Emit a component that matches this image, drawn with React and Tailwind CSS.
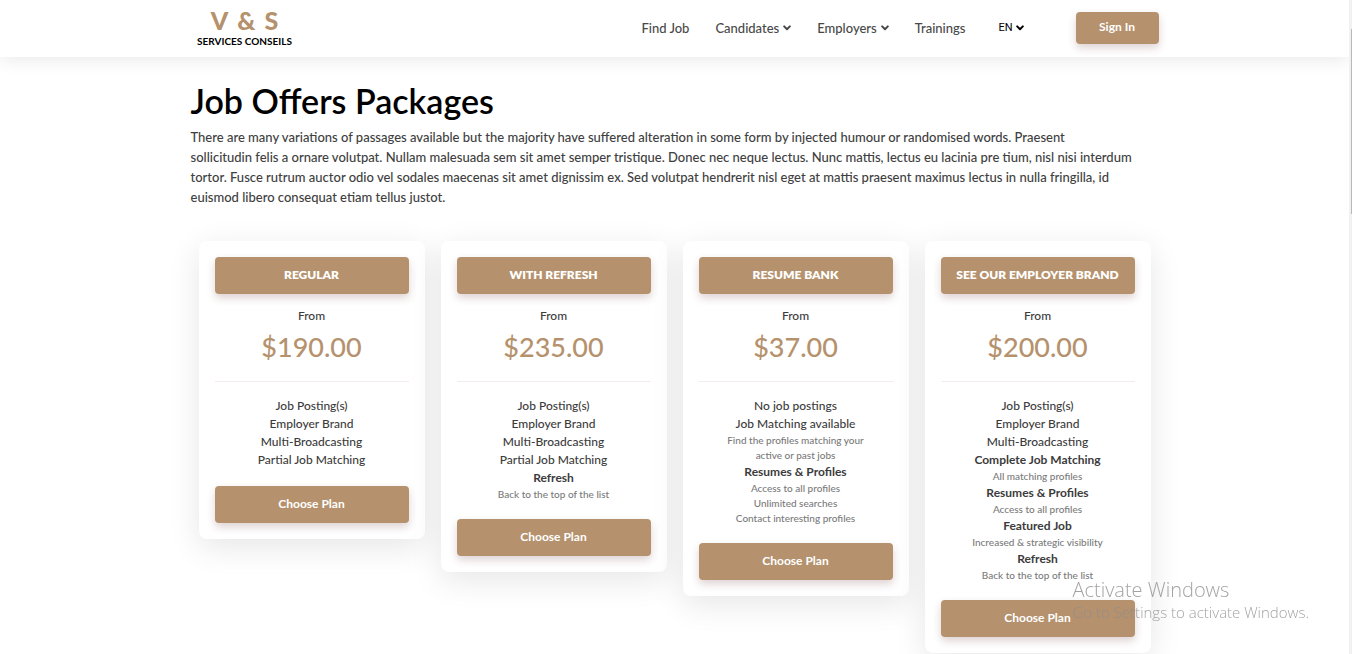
import React from "react";

const plans = [
  {
    name: "REGULAR",
    price: "$190.00",
    features: [
      { label: "Job Posting(s)" },
      { label: "Employer Brand" },
      { label: "Multi-Broadcasting" },
      { label: "Partial Job Matching" },
    ],
  },
  {
    name: "WITH REFRESH",
    price: "$235.00",
    features: [
      { label: "Job Posting(s)" },
      { label: "Employer Brand" },
      { label: "Multi-Broadcasting" },
      { label: "Partial Job Matching" },
      { label: "Refresh", strong: true, notes: ["Back to the top of the list"] },
    ],
  },
  {
    name: "RESUME BANK",
    price: "$37.00",
    features: [
      { label: "No job postings" },
      { label: "Job Matching available", notes: ["Find the profiles matching your active or past jobs"] },
      {
        label: "Resumes & Profiles",
        strong: true,
        notes: ["Access to all profiles", "Unlimited searches", "Contact interesting profiles"],
      },
    ],
  },
  {
    name: "SEE OUR EMPLOYER BRAND",
    price: "$200.00",
    features: [
      { label: "Job Posting(s)" },
      { label: "Employer Brand" },
      { label: "Multi-Broadcasting" },
      { label: "Complete Job Matching", strong: true, notes: ["All matching profiles"] },
      { label: "Resumes & Profiles", strong: true, notes: ["Access to all profiles"] },
      { label: "Featured Job", strong: true, notes: ["Increased & strategic visibility"] },
      { label: "Refresh", strong: true, notes: ["Back to the top of the list"] },
    ],
  },
];

function Chevron({ className }) {
  return (
    <svg viewBox="0 0 8 6" aria-hidden="true" className={`h-[6px] w-2 fill-none stroke-current ${className || ""}`}>
      <path d="M1.2 1.4 L4 4.2 L6.8 1.4" strokeWidth="2" strokeLinecap="round" strokeLinejoin="round" />
    </svg>
  );
}

function Logo() {
  return (
    <a href="#home" className="flex w-[98px] flex-col items-center pb-[5px]">
      <span className="flex gap-[9px] text-[25px] leading-[30px] font-black text-[#b5926d]">
        <span>V</span>
        <span>&amp;</span>
        <span>S</span>
      </span>
      <span className="text-[10px] leading-3 font-bold whitespace-nowrap text-black">SERVICES CONSEILS</span>
    </a>
  );
}

function Header() {
  return (
    <header className="bg-white shadow-[0_4px_16px_rgba(0,0,0,0.08)]">
      <div className="mx-auto flex h-[57px] max-w-[968px] items-center pb-px pl-[5px]">
        <Logo />
        <nav className="ml-auto flex items-center gap-[26px] text-[13px] leading-5 font-medium text-[#484848]">
          <a href="#jobs">Find Job</a>
          <button type="button" className="flex items-center gap-1">
            Candidates
            <Chevron />
          </button>
          <button type="button" className="flex items-center gap-1">
            Employers
            <Chevron />
          </button>
          <a href="#trainings">Trainings</a>
        </nav>
        <div className="relative ml-[33px] flex items-center text-black">
          <select
            aria-label="Language"
            defaultValue="EN"
            className="w-[25px] appearance-none bg-transparent font-['Roboto',sans-serif] text-[11px] leading-4"
          >
            <option>EN</option>
            <option>FR</option>
          </select>
          <Chevron className="pointer-events-none absolute right-0" />
        </div>
        <button
          type="button"
          className="ml-[52px] h-8 w-[83px] rounded-[4px] bg-[#b5926d] pb-[2px] text-[12px] font-bold text-white shadow-[0_4px_8px_rgba(90,30,30,0.2)]"
        >
          Sign In
        </button>
      </div>
    </header>
  );
}

function PlanCard({ plan }) {
  return (
    <article className="rounded-lg bg-white p-4 text-center shadow-[0_8px_32px_rgba(0,0,0,0.1)]">
      <h2 className="flex h-[37px] items-center justify-center rounded-[4px] bg-[#b5926d] pb-px text-[12px] font-extrabold whitespace-nowrap text-white shadow-[0_4px_8px_rgba(90,30,30,0.2)]">
        {plan.name}
      </h2>
      <p className="mt-3 text-[12px] leading-5 font-medium text-[#3c3c3c]">From</p>
      <p className="mt-[3px] text-[27px] leading-9 font-medium text-[#b5926d]">{plan.price}</p>
      <hr className="mt-4 border-[#f5eaec]" />
      <ul className="mt-[15px] text-[12px] leading-[18px] text-[#3c3c3c]">
        {plan.features.map((feature) => (
          <li key={feature.label}>
            <p className={feature.strong ? "font-bold" : "font-medium"}>{feature.label}</p>
            {feature.notes?.map((note) => (
              <p key={note} className="mx-auto max-w-[150px] text-[10px] leading-[15px] font-medium text-[#7a7a7a]">
                {note}
              </p>
            ))}
          </li>
        ))}
      </ul>
      <button
        type="button"
        className="mt-[17px] h-[37px] w-full rounded-[4px] bg-[#b5926d] pb-[2px] text-[12px] font-bold text-white shadow-[0_4px_8px_rgba(90,30,30,0.2)]"
      >
        Choose Plan
      </button>
    </article>
  );
}

export default function App() {
  return (
    <div className="flex min-h-screen bg-white font-['Lato','Open_Sans',sans-serif]">
      <div className="min-w-0 flex-1 overflow-hidden">
        <Header />
        <main className="mx-auto max-w-[968px]">
          <h1 className="pt-6 text-[34px] leading-10 font-semibold text-black">Job Offers Packages</h1>
          <p className="mt-[6px] text-[13px] leading-[20px] font-medium text-[#404040]">
            There are many variations of passages available but the majority have suffered alteration in some form by
            injected humour or randomised words. Praesent <br className="hidden lg:inline" />
            sollicitudin felis a ornare volutpat. Nullam malesuada sem sit amet semper tristique. Donec nec neque lectus.
            Nunc mattis, lectus eu lacinia pre tium, nisl nisi interdum <br className="hidden lg:inline" />
            tortor. Fusce rutrum auctor odio vel sodales maecenas sit amet dignissim ex. Sed volutpat hendrerit nisl eget
            at mattis praesent maximus lectus in nulla fringilla, id <br className="hidden lg:inline" />
            euismod libero consequat etiam tellus justot.
          </p>
          <section className="mt-[34px] grid grid-cols-1 items-start gap-4 px-2 sm:grid-cols-2 lg:grid-cols-4">
            {plans.map((plan) => (
              <PlanCard key={plan.name} plan={plan} />
            ))}
          </section>
        </main>
      </div>
      <div className="flex w-[3px] shrink-0 justify-end bg-[#f1f1f1] pt-[29px]">
        <div className="h-[185px] w-px bg-[#b8b8b8]" />
      </div>
      <div className="pointer-events-none fixed right-[43px] bottom-[32px] font-['Open_Sans','Noto_Sans',sans-serif] font-light text-[#8c8c8c]/80">
        <p className="text-[20px] leading-6">Activate Windows</p>
        <p className="text-[15px] leading-5">Go to Settings to activate Windows.</p>
      </div>
    </div>
  );
}
